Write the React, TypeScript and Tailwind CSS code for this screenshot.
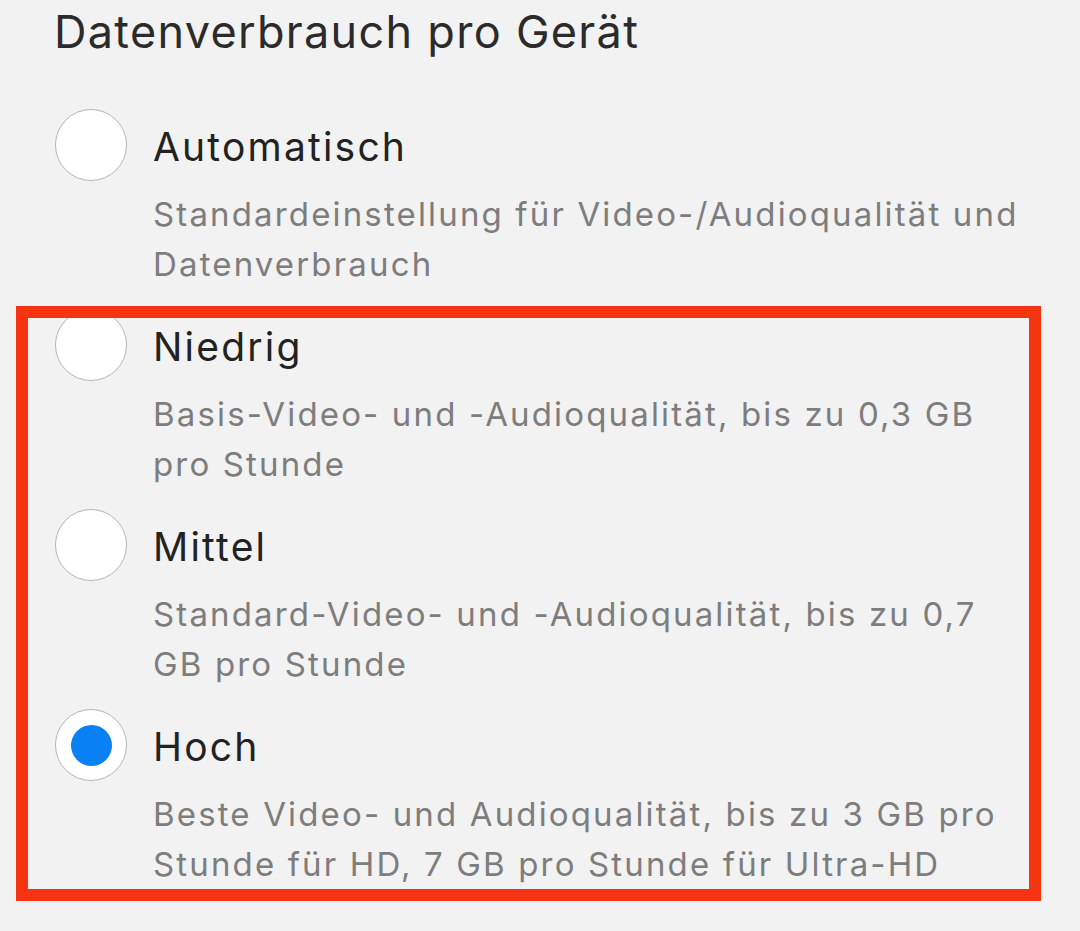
import { useState } from "react";

const OPTIONS = [
  {
    id: "auto",
    label: "Automatisch",
    desc: "Standardeinstellung für Video-/Audioqualität und Datenverbrauch",
  },
  {
    id: "low",
    label: "Niedrig",
    desc: "Basis-Video- und -Audioqualität, bis zu 0,3 GB pro Stunde",
  },
  {
    id: "mid",
    label: "Mittel",
    desc: "Standard-Video- und -Audioqualität, bis zu 0,7 GB pro Stunde",
  },
  {
    id: "high",
    label: "Hoch",
    desc: "Beste Video- und Audioqualität, bis zu 3 GB pro Stunde für HD, 7 GB pro Stunde für Ultra-HD",
  },
];

export default function App() {
  const [selected, setSelected] = useState("high");

  return (
    <div className="relative w-full h-[931px] overflow-hidden bg-[#f2f2f2] font-['Inter',sans-serif]">
      <h1 className="pl-[54px] h-[64px] text-[45px] leading-[64px] font-normal text-[#2b2b2b] tracking-[1.3px]">
        Datenverbrauch pro Gerät
      </h1>

      <div className="mt-[36px] flex flex-col">
        {OPTIONS.map((opt) => (
          <button
            key={opt.id}
            onClick={() => setSelected(opt.id)}
            className="flex h-[200px] items-start text-left pl-[55px]"
          >
            <span className="mt-[9px] flex h-[72px] w-[72px] shrink-0 items-center justify-center rounded-full border border-[#b5b5b5] bg-white">
              {selected === opt.id && (
                <span className="h-[41px] w-[41px] rounded-full bg-[#0a80f5]" />
              )}
            </span>
            <span className="ml-[26px] flex w-[874px] flex-col pt-[23px]">
              <span className="text-[39px] leading-[48px] text-[#222222] tracking-[2.2px]">
                {opt.label}
              </span>
              <span className="mt-[18px] text-[33px] leading-[50px] text-[#7d7d7d] tracking-[2.15px]">
                {opt.desc}
              </span>
            </span>
          </button>
        ))}
      </div>

      {/* annotation frame */}
      <div className="pointer-events-none absolute left-[16px] top-[306px] h-[595px] w-[1025px] border-[12px] border-[#f53512]" />
    </div>
  );
}
